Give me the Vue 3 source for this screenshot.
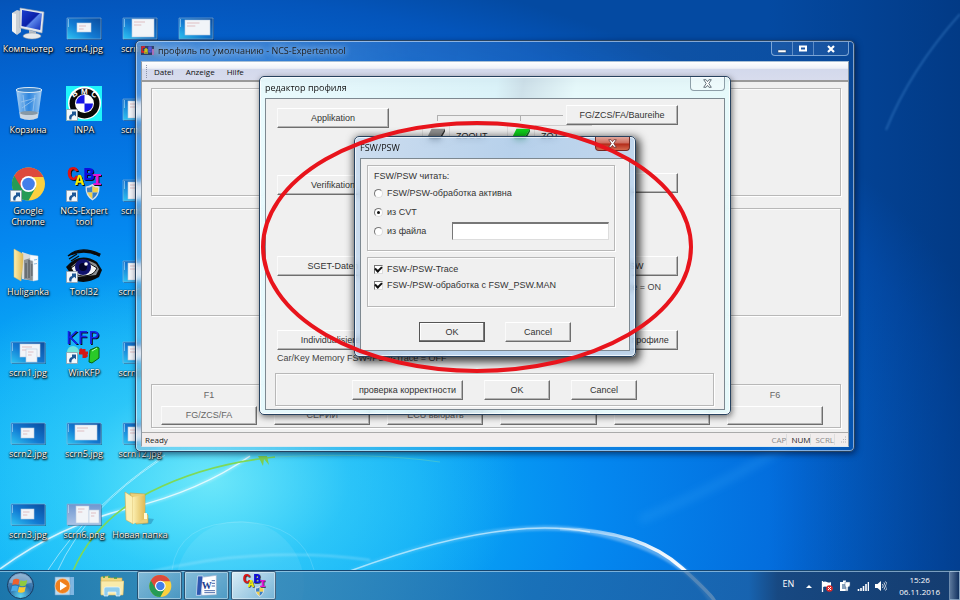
<script setup>
import { h, ref } from 'vue'

const cyanShot = (label, win) => ({ label, icon: 'shot', fill: 'url(#shotBlue)', win })

const desktopItems = [
  { label: 'Компьютер', icon: 'computer' },
  { label: 'Корзина', icon: 'bin' },
  { label: 'Google Chrome', icon: 'chrome', shortcut: true },
  { label: 'Huliganka', icon: 'folder-files' },
  cyanShot('scrn1.jpg', [[9, 2, 20, 13], [15, 7, 11, 13]]),
  cyanShot('scrn2.jpg', [[10, 5, 13, 10]]),
  cyanShot('scrn3.jpg', [[10, 5, 13, 10]]),
  cyanShot('scrn4.jpg', [[10, 5, 14, 9]]),
  { label: 'INPA', icon: 'inpa', shortcut: true },
  { label: 'NCS-Expert tool', icon: 'cabi', shortcut: true },
  { label: 'Tool32', icon: 'eye', shortcut: true },
  { label: 'WinKFP', icon: 'kfp', shortcut: true },
  cyanShot('scrn5.jpg', [[8, 2, 22, 15]]),
  { label: 'scrn6.png', icon: 'shot', fill: 'url(#shotPale)', win: [[9, 2, 13, 17], [22, 6, 10, 13]] },
  cyanShot('scrn7.jpg', [[9, 1, 22, 18]]),
  cyanShot('scrn8.jpg', [[5, 2, 26, 17]]),
  cyanShot('scrn9.jpg', [[5, 2, 26, 17]]),
  cyanShot('scrn10.jpg', [[5, 2, 26, 17]]),
  cyanShot('scrn11.jpg', [[5, 4, 26, 14]]),
  cyanShot('scrn12.jpg', [[5, 4, 26, 14]]),
  { label: 'Новая папка', icon: 'folder' },
  cyanShot('', [[6, 2, 25, 15]]),
]

const mono = 'Liberation Mono, monospace'
const sans = 'Liberation Sans, sans-serif'
const letters = {
  cabi: [
    { t: 'C', x: 1, y: 14, size: 20, fill: '#df1414', font: mono },
    { t: 'A', x: 9, y: 19, size: 15, fill: '#f5f000', font: mono },
    { t: 'B', x: 17, y: 14, size: 19, fill: '#1111dd', font: mono },
    { t: 'I', x: 26, y: 19, size: 17, fill: '#e513d5', font: mono },
  ],
  kfp: [{ t: 'KFP', x: 0, y: 16, size: 18, fill: '#1326e8', font: 'DejaVu Sans, sans-serif', weight: 400 }],
  inpa: [
    { t: 'B', x: 6, y: 12, size: 8, fill: '#fff', font: sans, turn: 'rotate(-35 8 10)' },
    { t: 'M', x: 15, y: 9, size: 8, fill: '#fff', font: sans },
    { t: 'C', x: 25, y: 12, size: 8, fill: '#fff', font: sans, turn: 'rotate(35 28 10)' },
  ],
  word: [{ t: 'W', x: 10, y: 22, size: 15, fill: '#1d3f92', font: 'Liberation Serif, serif' }],
}

const Glyph = ({ name, shortcut }) =>
  h('svg', { viewBox: '0 0 36 36', 'aria-hidden': 'true' }, [
    h('use', { href: `#i-${name}`, width: 36, height: 36 }),
    h('g', { filter: name === 'cabi' || name === 'kfp' ? 'url(#drop)' : undefined },
      (letters[name] || []).map((l) =>
        h('text', { x: l.x, y: l.y, fill: l.fill, transform: l.turn, 'font-family': l.font, 'font-size': l.size, 'font-weight': l.weight || 700 }, l.t))),
    shortcut ? h('use', { href: '#i-shortcut', x: 0, y: 24, width: 12, height: 12 }) : null,
  ])
Glyph.props = ['name', 'shortcut']

const functionKeys = [
  { key: 'F1', text: 'FG/ZCS/FA' },
  { key: '', text: 'СЕРИЙ' },
  { key: '', text: 'ECU выбрать' },
  { key: '', text: '' },
  { key: '', text: '' },
  { key: 'F6', text: '' },
]

const taskButtons = [
  { icon: 'chrome', name: 'Google Chrome' },
  { icon: 'word', name: 'Word' },
  { icon: 'cabi', name: 'NCS-Expertentool', active: true },
]

const source = ref('cvt')
const fileName = ref('')
const trace = ref(true)
const manual = ref(true)
</script>

<template>
  <div class="desktop">
    <svg class="defs" width="0" height="0" aria-hidden="true">
      <defs>
        <linearGradient id="shotBlue" x1="0" y1="1" x2="1" y2="0">
          <stop offset="0" stop-color="#2ec6f4" /><stop offset=".45" stop-color="#1279d2" /><stop offset="1" stop-color="#0a4c9e" />
        </linearGradient>
        <linearGradient id="shotPale" x1="0" y1="0" x2="0" y2="1">
          <stop offset="0" stop-color="#6f96cf" /><stop offset="1" stop-color="#a9c3e6" />
        </linearGradient>
        <linearGradient id="screen" x1="0" y1="0" x2="1" y2="1">
          <stop offset="0" stop-color="#1d3fd0" /><stop offset=".5" stop-color="#0a1fa8" /><stop offset=".55" stop-color="#5b86ea" /><stop offset="1" stop-color="#0d2bb8" />
        </linearGradient>
        <linearGradient id="folderFill" x1="0" y1="0" x2="1" y2="0">
          <stop offset="0" stop-color="#fbeeae" /><stop offset="1" stop-color="#dfb955" />
        </linearGradient>
        <linearGradient id="glassBin" x1="0" y1="0" x2="1" y2="0">
          <stop offset="0" stop-color="#d5ecfb" stop-opacity=".8" /><stop offset=".5" stop-color="#5da5e6" stop-opacity=".5" /><stop offset="1" stop-color="#d5ecfb" stop-opacity=".8" />
        </linearGradient>
        <radialGradient id="orb" cx=".5" cy=".9" r=".9">
          <stop offset="0" stop-color="#5fd4f0" /><stop offset=".5" stop-color="#2a6ca8" /><stop offset="1" stop-color="#6f9cc4" />
        </radialGradient>
        <filter id="drop" x="-10%" y="-10%" width="130%" height="130%"><feDropShadow dx="1" dy="1" stdDeviation="0" flood-color="#111" /></filter>
      </defs>

      <symbol id="i-computer" viewBox="0 0 36 36">
        <path d="M2 9l5-3 4 1v21l-4 3-5-4z" fill="#c9cfd4" /><path d="M2 9l4 1v20l-4-3z" fill="#f1f3f4" />
        <path d="M10 4l24 4-2 21-22-5z" fill="#e5e9ee" stroke="#9aa5b1" stroke-width=".6" />
        <path d="M12 6l20 3.500-1.800 16.500L11.500 22z" fill="url(#screen)" />
        <path d="M19 26l7 2v4h-7z" fill="#b9bfc5" /><ellipse cx="22" cy="32" rx="9" ry="3" fill="#e6e9eb" stroke="#8b939b" stroke-width=".5" />
      </symbol>
      <symbol id="i-bin" viewBox="0 0 36 36">
        <path d="M6 4h26l-4 29q-9 4-18 0z" fill="url(#glassBin)" />
        <ellipse cx="19" cy="5" rx="13" ry="2.500" fill="#3b83c9" stroke="#dbeaf6" />
        <path d="M13 10l2 16M25 10l-2 16M11 17l15-4M12 23l13-9" stroke="#a6cdef" stroke-width=".7" fill="none" />
        <path d="M9.500 27q9 3 19 0l-1 6q-8 4-17 0z" fill="#d7dde1" opacity=".9" /><ellipse cx="19" cy="28" rx="9" ry="2" fill="#8799a6" />
      </symbol>
      <symbol id="i-chrome" viewBox="0 0 36 36">
        <circle cx="18.500" cy="18" r="16.500" fill="#fbd03f" />
        <path d="M18.500 18L4.200 9.700A16.500 16.500 0 0 0 18.500 34.500L26 21z" fill="#259b55" />
        <path d="M4.200 9.700A16.500 16.500 0 0 1 33.400 11H18.500l-7 11z" fill="#dd4a3c" />
        <circle cx="18.500" cy="18" r="8" fill="#fff" /><circle cx="18.500" cy="18" r="6.300" fill="#437fea" />
      </symbol>
      <symbol id="i-folder-files" viewBox="0 0 36 36">
        <path d="M12 5l12 4v25l-12-2z" fill="#d9dcde" /><path d="M14 13l10-3v24l-10-2z" fill="#8b9195" />
        <path d="M16 16v15M19 13v18M22 17v12" stroke="#484f54" /><path d="M20 8l8 1v24l-5 1V14l-3-1z" fill="#f7fbff" stroke="#cbd8e2" stroke-width=".5" /><path d="M24 13l3-.5M24 17l3-.5" stroke="#8dbbe0" />
        <path d="M4 2l9 5v8l-2 19-7-4z" fill="url(#folderFill)" stroke="#d8bd68" stroke-width=".5" />
      </symbol>
      <symbol id="i-folder" viewBox="0 0 36 36">
        <path d="M24 28l8 1-3 5-9 1z" fill="#124d7f" opacity=".3" />
        <path d="M8 3l15 1v19l3 2v8l-12 1z" fill="#ecd078" stroke="#c39d44" stroke-width=".6" />
        <path d="M3 2l8 5v27l-7-4z" fill="#fbefb3" stroke="#cfaa52" stroke-width=".6" /><path d="M11 7l12-2v24l-12 5z" fill="url(#folderFill)" /><path d="M22 23h3v6h-3z" fill="#fffad9" />
      </symbol>
      <symbol id="i-inpa" viewBox="0 0 36 36">
        <path d="M0 1h36v35H0z" fill="#1ff5fa" /><circle cx="18.500" cy="18" r="16.500" fill="#fff" /><circle cx="18.500" cy="18.500" r="15" fill="#090909" />
        <circle cx="18.500" cy="18.500" r="9.500" fill="#fff" />
        <path d="M18.500 18.500V10a8.500 8.500 0 0 0-8.500 8.500zM18.500 18.500V27a8.500 8.500 0 0 0 8.500-8.500z" fill="#1515e6" />
      </symbol>
      <symbol id="i-shield" viewBox="0 0 16 18">
        <path d="M8 0q4 2.500 7.500 2.500Q16 13 8 17.500 0 13 .5 2.500 4 2.500 8 0z" fill="#d9e0e8" />
        <path d="M8 2Q5 4 2 4q0 3 .5 5H8z" fill="#3c7fc4" /><path d="M8 2q3 2 6 2 0 3-.5 5H8z" fill="#f4d147" />
        <path d="M2.500 9H8v7Q4 13 2.500 9z" fill="#f4d147" /><path d="M13.500 9H8v7q4-3 5.500-7z" fill="#3c7fc4" />
      </symbol>
      <symbol id="i-cabi" viewBox="0 0 36 36"><use href="#i-shield" x="19" y="18" width="15" height="17" /></symbol>
      <symbol id="i-eye" viewBox="0 0 36 36">
        <path d="M2 9Q14-2 34 7q-1 2-1 2Q18 1 2 9zM3 12l8-5M5 14l8-5" fill="#0b0b0b" stroke="#0b0b0b" stroke-width="1.300" />
        <path d="M0 20Q14 4 31 15l5 8-3 7q-14 8-24 3z" fill="#0b0b0b" /><path d="M5 20q11-12 25-3l3 5-3 6-18 2z" fill="#8c8f92" />
        <path d="M5 21q12-11 26 0-3 8-14 8-8 0-12-8z" fill="#f5f5f5" stroke="#0b0b0b" />
        <circle cx="17" cy="20" r="8" fill="#10126e" /><circle cx="17" cy="20" r="4" fill="#04042a" /><circle cx="20" cy="17" r="1.800" fill="#fff" />
      </symbol>
      <symbol id="i-kfp" viewBox="0 0 36 36">
        <circle cx="7" cy="24" r="6" fill="#6ee3dc" /><path d="M13 25h9M18 21v9M14 21l7 8" stroke="#d31717" stroke-width="3" />
        <path d="M24 22l7-3 2 1v10l-7 5-3-1z" fill="#2ac929" stroke="#08640f" /><path d="M26 23l5-3" stroke="#b8ffb1" />
      </symbol>
      <symbol id="i-word" viewBox="0 0 36 36">
        <path d="M10 5l22-3v29l-22 1z" fill="#fff" stroke="#9db0d0" /><path d="M25 10h5M25 14h5M25 18h5M14 25h16M14 28h16" stroke="#30519b" stroke-width="1.300" />
        <path d="M4 3h8L9 32H2z" fill="#2e57b0" stroke="#e6eefb" />
      </symbol>
      <symbol id="i-shortcut" viewBox="0 0 12 12">
        <path d="M.5.5h11v11H.5z" fill="#f2f7fb" stroke="#8f9ca8" stroke-width=".8" /><path d="M3.500 10.500Q2 6 6 5V2.500h4v5L8.500 6Q5 7 5.500 10.500z" fill="#1d5795" />
      </symbol>
    </svg>

    <svg class="wallpaper" viewBox="0 0 960 600" preserveAspectRatio="none" aria-hidden="true">
      <defs>
        <linearGradient id="arc" x1="0" x2="1"><stop offset="0" stop-color="#fff" stop-opacity=".15" /><stop offset=".6" stop-color="#fff" stop-opacity=".9" /><stop offset="1" stop-color="#fff" /></linearGradient>
        <filter id="soft"><feGaussianBlur stdDeviation="1.200" /></filter>
        <filter id="haze"><feGaussianBlur stdDeviation="4" /></filter>
      </defs>
      <g fill="none">
        <path d="M640 520Q770 465 850 400" stroke="#4cb6ff" stroke-width="7" opacity=".22" filter="url(#haze)" />
        <path d="M960 14Q910 70 886 130" stroke="#5fa9ee" stroke-width="1.500" opacity=".4" filter="url(#soft)" />
        <circle cx="240" cy="585" r="64" fill="#fff" opacity=".08" /><path d="M172 570q6-48 70-48 60 2 72 48" stroke="#fff" opacity=".15" />
        <path d="M150 572Q260 545 370 560" stroke="#fff" stroke-width="2" opacity=".25" filter="url(#soft)" />
        <path d="M0 569Q60 525 130 508T250 456" stroke="#fff" stroke-width="4" opacity=".25" filter="url(#soft)" />
        <path d="M0 569Q60 525 130 508T250 456" stroke="#fff" stroke-width="1.500" opacity=".75" />
        <path d="M48 570Q90 505 165 455M58 570Q85 510 160 460" stroke="#fff" opacity=".5" />
        <path d="M73 571Q95 520 150 492T275 457" stroke="#7ed957" stroke-width="1.600" />
        <path d="M275 457Q370 452 440 462" stroke="#8de3a0" opacity=".35" />
        <path d="M258 456l5 10 1-7 5 6-2-9z" fill="#7ccf51" />
        <path d="M350 571Q500 515 590 532T712 602" stroke="url(#arc)" stroke-width="5" opacity=".35" filter="url(#soft)" />
        <path d="M350 571Q500 515 590 532" stroke="#d9f2ff" stroke-width="1.500" opacity=".7" />
        <path d="M560 529Q640 530 682 568T712 602" stroke="url(#arc)" stroke-width="3.500" />
      </g>
    </svg>

    <ul class="icons">
      <li v-for="(item, i) in desktopItems" :key="i">
        <a href="#" class="icon">
          <svg v-if="item.icon === 'shot'" viewBox="0 0 36 36" class="glyph" aria-hidden="true">
            <path d="M2 15h34v21H2z" fill="#04294f" opacity=".45" />
            <path d="M1 14h34v21H1z" :fill="item.fill" stroke="#8db4d4" stroke-width=".6" />
            <path d="M2 16h1M2 18h1M2 20h1M2 22h1" stroke="#d8f0ff" />
            <g v-for="(w, n) in item.win" :key="n">
              <rect :x="w[0] + 1" :y="w[1] + 14" :width="w[2]" :height="w[3]" fill="#f1f4f8" stroke="#b9cbe0" stroke-width=".6" />
              <path :d="`M${w[0] + 3} ${w[1] + 17}h${w[2] / 2}M${w[0] + 3} ${w[1] + 20}h${w[2] / 3}`" stroke="#d59a9f" stroke-width=".6" />
            </g>
          </svg>
          <Glyph v-else class="glyph" :name="item.icon" :shortcut="item.shortcut" />
          <span class="caption">{{ item.label }}</span>
        </a>
      </li>
    </ul>

    <section class="window main-window">
      <header class="titlebar">
        <svg class="app-icon" viewBox="0 0 13 10" aria-hidden="true">
          <path d="M0 0h13v9H0z" fill="#12143c" opacity=".65" />
          <path d="M4 1H1v5h3" fill="none" stroke="#ee2020" stroke-width="1.400" /><path d="M4 8V3h2v5M4 5h2" fill="none" stroke="#f5f000" />
          <path d="M8 1v5h2V1zM8 3h2" fill="none" stroke="#5a5af5" stroke-width="1.200" /><path d="M12 3v6" stroke="#e989df" stroke-width="1.300" />
        </svg>
        <h1 class="title glow">профиль по умолчанию - NCS-Expertentool</h1>
        <div class="controls">
          <button type="button" aria-label="Minimize"><svg viewBox="0 0 12 10"><path d="M2 6h8v2.500H2z" fill="#fff" stroke="#304a6a" stroke-width=".5" /></svg></button>
          <button type="button" aria-label="Maximize"><svg viewBox="0 0 12 10"><path d="M3 2.500h6v4H3z" fill="none" stroke="#fff" stroke-width="2" /></svg></button>
          <button type="button" class="wide" aria-label="Close"><svg viewBox="0 0 12 10"><path d="M3 2l6 6M9 2L3 8" stroke="#fff" stroke-width="2.200" /></svg></button>
        </div>
      </header>
      <div class="client main-client">
        <nav class="menubar">
          <span class="grip"></span>
          <a href="#">Datei</a><a href="#">Anzeige</a><a href="#">Hilfe</a>
        </nav>
        <div class="workspace">
          <div class="etched panel"></div>
          <div class="etched panel"></div>
          <div class="etched keys">
            <div v-for="(f, i) in functionKeys" :key="i" class="key">
              <span class="key-name">{{ f.key }}</span>
              <button type="button" class="btn muted">{{ f.text }}</button>
            </div>
          </div>
        </div>
        <footer class="status">
          <span class="ready">Ready</span><span class="lock">CAP</span><span class="lock on">NUM</span><span class="lock">SCRL</span>
          <svg class="sizer" viewBox="0 0 8 8" aria-hidden="true"><path d="M6 1h1M4 3.500h1M6 3.500h1M2 6h1M4 6h1M6 6h1" stroke="#b5b5b5" stroke-width="1.200" /></svg>
        </footer>
      </div>
    </section>

    <section class="window profile-window">
      <header class="titlebar">
        <h2 class="title">редактор профиля</h2>
        <button type="button" class="close pale" aria-label="Close"><svg viewBox="0 0 12 10"><path d="M2.500 1.500h2.200L6 3.300l1.300-1.800h2.200L7.200 5l2.300 3.500H7.300L6 6.700 4.700 8.500H2.500L4.800 5z" fill="#fff" stroke="#505e68" stroke-width=".8" /></svg></button>
      </header>
      <div class="client profile-client">
        <div class="columns">
          <div class="col left">
            <button type="button" class="btn">Applikation</button>
            <button type="button" class="btn">Verifikation</button>
            <button type="button" class="btn">SGET-Daten</button>
            <button type="button" class="btn">Individualisieren</button>
            <span class="note">Car/Key Memory FSW-/PSW-Trace = OFF</span>
          </div>
          <div class="flow">
            <div class="bus"><span></span></div>
            <div class="leds">
              <svg viewBox="0 0 28 20" aria-hidden="true"><path d="M9 3h15l-5 8H5z" fill="#909090" /><path d="M24 3v3l-5 9H7l-2-4h14z" fill="#333" /></svg>
              <span class="cell">ZOOUT</span>
              <svg viewBox="0 0 28 20" aria-hidden="true"><path d="M9 3h15l-5 8H5z" fill="#0ed11c" /><path d="M24 3v3l-5 9H7l-2-4h14z" fill="#0d7c1c" /></svg>
              <span class="cell">ZOT</span>
            </div>
          </div>
          <div class="col right">
            <button type="button" class="btn">FG/ZCS/FA/Baureihe</button>
            <button type="button" class="btn" aria-label="Option"></button>
            <button type="button" class="btn">FSW/PSW</button>
            <span class="note">FSW-/PSW-Trace = ON</span>
            <button type="button" class="btn">параметры в профиле</button>
          </div>
        </div>
        <div class="etched actions">
          <button type="button" class="btn large">проверка корректности</button>
          <button type="button" class="btn small">OK</button>
          <button type="button" class="btn small">Cancel</button>
        </div>
      </div>
    </section>

    <section class="window fsw-window">
      <header class="titlebar">
        <h2 class="title">FSW/PSW</h2>
        <button type="button" class="close red" aria-label="Close"><svg viewBox="0 0 12 10"><path d="M2.500 1.500h2.200L6 3.300l1.300-1.800h2.200L7.200 5l2.300 3.500H7.300L6 6.700 4.700 8.500H2.500L4.800 5z" fill="#fff" stroke="#63302e" stroke-width=".7" /></svg></button>
      </header>
      <form class="client fsw-client" @submit.prevent>
        <div class="etched source" role="radiogroup" aria-labelledby="src-title">
          <span id="src-title" class="legend">FSW/PSW читать:</span>
          <label class="option"><input v-model="source" type="radio" name="source" value="active" />FSW/PSW-обработка активна</label>
          <label class="option"><input v-model="source" type="radio" name="source" value="cvt" />из CVT</label>
          <div class="file-row">
            <label class="option"><input v-model="source" type="radio" name="source" value="file" />из файла</label>
            <input v-model="fileName" type="text" class="file" aria-label="из файла" />
          </div>
        </div>
        <div class="etched checks">
          <label class="option"><input v-model="trace" type="checkbox" />FSW-/PSW-Trace</label>
          <label class="option"><input v-model="manual" type="checkbox" />FSW-/PSW-обработка с FSW_PSW.MAN</label>
        </div>
        <div class="buttons">
          <button type="submit" class="btn small default">OK</button>
          <button type="button" class="btn small">Cancel</button>
        </div>
      </form>
    </section>

    <svg class="marker" viewBox="0 0 432 252" aria-hidden="true"><ellipse cx="216" cy="126" rx="214" ry="124" fill="none" stroke="#e8141c" stroke-width="4" /></svg>

    <footer class="taskbar">
      <button type="button" class="start" aria-label="Пуск">
        <svg viewBox="0 0 30 30">
          <circle cx="15" cy="15" r="13.500" fill="url(#orb)" stroke="#16395e" /><path d="M3 12a12.500 12.500 0 0 1 24 0Q15 16 3 12z" fill="#fff" opacity=".3" />
          <path d="M7.500 9q3.500-2 6.500 0l-1.200 5.500q-3.200-1.700-6.300 0z" fill="#f0602c" /><path d="M15 9.500q3.500 1.700 7-.3l-1.300 5.600q-3.400 1.700-6.900.2z" fill="#8fca3e" />
          <path d="M6.300 15.800q3.200-1.700 6.300 0l-1.200 5.400q-3-1.700-6.300 0z" fill="#49a9e8" /><path d="M13.500 16.200q3.500 1.500 7-.2l-1.300 5.500q-3.400 1.700-6.900.2z" fill="#fdc92f" />
        </svg>
      </button>
      <button type="button" class="pinned" aria-label="Media Player">
        <svg viewBox="0 0 24 24"><path d="M7 3h15v18H7z" fill="#7eb6e2" /><path d="M3 3h15v18H3z" fill="#b6daf2" stroke="#6b9cc4" stroke-width=".6" /><circle cx="10.500" cy="12" r="7.500" fill="#f0801d" stroke="#fbd7ac" stroke-width=".6" /><path d="M8 7.500l7 4.500-7 4.500z" fill="#fff" /></svg>
      </button>
      <button type="button" class="pinned" aria-label="Explorer">
        <svg viewBox="0 0 24 24"><path d="M1 3l8-1 1 2h12v16H1z" fill="#f2d77d" stroke="#c9a84a" stroke-width=".6" /><path d="M3 3h2M8 3h2M14 4h3" stroke="#3d9c4d" stroke-width="1.500" /><path d="M1 7h23l-1 14H1z" fill="#faebab" stroke="#d3b660" stroke-width=".6" /><path d="M4 22v-7q0-2 2-2h12q2 0 2 2v7h-4v-4H8v4z" fill="#8fcdee" stroke="#e8f7ff" stroke-width=".7" /></svg>
      </button>
      <button v-for="t in taskButtons" :key="t.icon" type="button" class="task" :class="{ active: t.active }" :aria-label="t.name">
        <Glyph class="task-glyph" :name="t.icon" />
      </button>
      <div class="tray">
        <span class="lang">EN</span>
        <svg class="tiny" viewBox="0 0 12 12"><path d="M3 8l3-3 3 3z" fill="#fff" /></svg>
        <svg class="tiny" viewBox="0 0 12 12"><path d="M1.500 1v11" stroke="#fff" stroke-width="1.300" /><path d="M2 2q2-1 4 0t4 0v5q-2 1-4 0t-4 0z" fill="#fff" /><circle cx="8.500" cy="8.500" r="3.300" fill="#dc2a2a" /><path d="M7 7l3 3M10 7l-3 3" stroke="#fff" /></svg>
        <svg class="tiny" viewBox="0 0 12 12"><path d="M1 2h3V.5h3V2h1v9H1z" fill="#fff" /><path d="M3 4h4v5H3z" fill="#8aa2bb" /><path d="M6 2h5v3q0 2-2 2v4H7V7Q6 7 6 5z" fill="#fff" stroke="#4c6a8c" stroke-width=".5" /></svg>
        <svg class="tiny" viewBox="0 0 12 12"><path d="M1.500 9v2M4 8v3M6.500 6v5M9 4v7M11.500 2v9" stroke="#fff" stroke-width="1.600" /></svg>
        <svg class="tiny" viewBox="0 0 12 12"><path d="M0 4h2.500L6 1v10L2.500 8H0z" fill="#fff" /><path d="M7.500 4q1.500 2 0 4M9 2.500q3 3.500 0 7M10.500 1.500q4 4.500 0 9" fill="none" stroke="#fff" stroke-width=".8" /></svg>
        <div class="clock"><span>15:26</span><span>06.11.2016</span></div>
      </div>
      <button type="button" class="peek" aria-label="Показать рабочий стол"></button>
    </footer>
  </div>
</template>

<style>
body { margin: 0; overflow: hidden; }
</style>

<style scoped>
* { box-sizing: border-box; }
.desktop {
  position: relative; display: flex; flex-direction: column; height: 100vh; overflow: hidden;
  font: 9px/11px "Open Sans", "Noto Sans", sans-serif; color: #222;
  background:
    radial-gradient(ellipse 32% 36% at 22% 80%, rgba(140, 245, 250, .75), rgba(90, 225, 250, .4) 45%, rgba(60, 200, 250, 0)),
    linear-gradient(90deg, rgba(0, 60, 150, 0) 80%, rgba(0, 45, 110, .55)),
    radial-gradient(ellipse 92% 92% at 16% 84%, #12c4fa 0, #09aaf6 30%, #0488f0 50%, #036cdc 72%, #0455bb 92%, #044aa2 100%);
}
.defs { position: absolute; }
.wallpaper { position: absolute; inset: 0; width: 100%; height: 100%; }
button, input { font: inherit; color: inherit; margin: 0; padding: 0; }
a { color: inherit; text-decoration: none; }
h1, h2 { margin: 0; font-size: inherit; font-weight: 400; }

.icons {
  position: relative; flex: 1; min-height: 0; margin: 0; padding: 4px 0 0; list-style: none;
  display: grid; grid-auto-flow: column; grid-template-rows: repeat(7, 81px); grid-auto-columns: 56px;
}
.icon { display: flex; flex-direction: column; align-items: center; gap: 3px; color: #fff; }
.glyph { width: 36px; height: 36px; }
.caption { text-align: center; text-shadow: 0 1px 2px #000, 1px 1px 2px #000, 0 0 1px #000; }

.window {
  position: absolute; display: flex; flex-direction: column;
  border: 1px solid #27425f; border-radius: 5px;
  backdrop-filter: blur(3px);
}
.titlebar { display: flex; align-items: center; }
.title { flex: 1; white-space: nowrap; }
.client { flex: 1; display: flex; flex-direction: column; background: #f0f0f0; border: 1px solid #7d8890; font-family: "Liberation Sans", Arial, sans-serif; }
.etched { border: 1px solid #b8b8b8; box-shadow: 1px 1px 0 #fff, inset 1px 1px 0 #fbfbfb; }
.btn {
  height: 20px; background: #f0f0f0; border: 1px solid; border-color: #fff #6e6e6e #6e6e6e #fafafa;
  box-shadow: inset -1px -1px 0 #b4b4b4; white-space: nowrap; text-align: center; color: #333;
}

.main-window {
  left: 135px; top: 40px; width: 720px; height: 412px; padding: 0 5px 4px;
  background: linear-gradient(100deg, rgba(190, 215, 240, .4), rgba(120, 165, 215, .22) 35%, rgba(70, 130, 195, .2) 55%, rgba(20, 80, 150, .2));
  box-shadow: inset 0 0 0 1px rgba(255, 255, 255, .5), 1px 2px 6px rgba(0, 10, 40, .6);
}
.main-window .titlebar { height: 20px; align-items: flex-start; padding-top: 1px; gap: 4px; }
.app-icon { width: 13px; height: 10px; margin-top: 4px; }
.glow { line-height: 18px; text-shadow: 0 0 6px rgba(255, 255, 255, .8), 0 0 8px rgba(255, 255, 255, .5); }
.controls { display: flex; border: 1px solid rgba(200, 225, 250, .6); border-top: 0; border-radius: 0 0 4px 4px; }
.controls button { display: flex; align-items: center; justify-content: center; width: 21px; height: 13px; border: 0; border-right: 1px solid rgba(200, 225, 250, .4); background: rgba(255, 255, 255, .06); }
.controls .wide { width: 34px; border-right: 0; }
.controls svg { width: 12px; height: 10px; }
.menubar {
  display: flex; align-items: center; gap: 12px; height: 20px; padding-left: 4px; color: #111;
  background: linear-gradient(#fff, #eef1f8 35%, #d3d9ec 40%, #d8dced); border-bottom: 2px solid #9a9a9a;
  font-family: "Open Sans", "Noto Sans", sans-serif; font-size: 8px;
}
.grip { height: 13px; margin-right: -5px; border-left: 1px dotted #8b93a8; }
.main-client { border-color: #a9c0d6 #8e9aa5 #dce8f0; }
.workspace { flex: 1; display: flex; flex-direction: column; padding: 6px 7px 4px 9px; }
.panel { height: 108px; margin-bottom: 12px; }
.keys { flex: none; display: grid; grid-template-columns: repeat(6, 1fr); column-gap: 17px; height: 44px; margin-top: auto; padding: 5px 17px 0 9px; }
.key { display: flex; flex-direction: column; gap: 5px; text-align: center; color: #666; }
.key-name { height: 11px; }
.btn.muted { height: 19px; color: #666; }
.status { display: flex; align-items: center; gap: 4px; height: 14px; padding: 0 1px 0 3px; border-top: 1px solid #aaa; background: #f1eded; font-family: "Open Sans", "Noto Sans", sans-serif; font-size: 8px; }
.ready { flex: 1; }
.lock { color: #8a8a8a; border-right: 1px solid #ddd; }
.lock.on { color: #222; }
.sizer { width: 8px; height: 8px; }

.profile-window {
  left: 259px; top: 76px; width: 472px; height: 339px; padding: 0 5px 4px;
  background: linear-gradient(100deg, rgba(232, 252, 255, .85), rgba(215, 243, 250, .85) 45%, rgba(200, 222, 232, .85) 50%, rgba(228, 250, 252, .85) 60%);
  box-shadow: inset 0 0 0 1px rgba(255, 255, 255, .8), 1px 2px 6px rgba(0, 0, 0, .55);
}
.profile-window .titlebar, .fsw-window .titlebar { height: 21px; flex: none; align-items: flex-start; }
.profile-window .title, .fsw-window .title { line-height: 21px; color: #111; }
.close { display: flex; align-items: center; justify-content: center; width: 35px; height: 14px; border: 1px solid; border-top: 0; border-radius: 0 0 4px 4px; }
.close svg { width: 13px; height: 11px; }
.close.pale { border-color: #8d9ea8; background: rgba(255, 255, 255, .35); }
.close.red { border-color: #702a24; background: linear-gradient(#e2a79c, #cc6a5b 48%, #b22a18 52%, #d46a4e); }
.profile-client { padding: 6px 10px 3px 9px; }
.columns { flex: 1; display: flex; justify-content: space-between; padding: 0 36px 0 2px; }
.col { flex: none; display: grid; width: 112px; grid-template-columns: 112px; align-content: start; }
.col.left { grid-template-rows: 67px 81px 74px 23px 11px; padding-top: 3px; }
.col.right { grid-template-rows: 68px 83px 26px 48px 20px; }
.note { white-space: nowrap; color: #444; }
.flow { flex: 1; min-width: 0; margin: 10px 3px 0 48px; }
.bus { height: 6px; border-top: 1px solid #b0b0b0; border-left: 1px solid #b0b0b0; display: flex; }
.bus span { width: 66%; border-right: 1px solid #b0b0b0; }
.leds { display: flex; margin: 4px 0 0 -15px; }
.leds svg { width: 28px; height: 20px; flex: none; border: 1px solid #ddd; }
.cell { flex: none; width: 57px; padding: 5px 0 0 6px; border-top: 1px solid #ccc; color: #222; }
.actions { display: flex; justify-content: center; gap: 21px; height: 33px; padding: 6px 0 0 0; }
.small { width: 66px; }
.large { width: 111px; }

.fsw-window {
  left: 354px; top: 136px; width: 282px; height: 221px; padding: 0 5px 5px;
  background: linear-gradient(100deg, rgba(180, 208, 238, .6), rgba(145, 188, 232, .6) 50%, rgba(165, 200, 236, .6));
  box-shadow: inset 0 0 0 1px rgba(255, 255, 255, .7), 2px 3px 9px 2px rgba(0, 0, 0, .75);
}
.fsw-client { padding: 6px 14px 0 6px; }
.source { display: grid; align-content: start; grid-template-rows: 16px 19px 19px 18px; height: 86px; padding: 2px 5px 0 6px; align-items: center; }
.legend, .option { color: #333; }
.option { display: flex; align-items: center; gap: 4px; white-space: nowrap; }
.option input { appearance: none; flex: none; width: 9px; height: 9px; background: #fff; border: 1px solid; border-color: #777 #ddd #ddd #777; display: grid; place-items: center; }
.option input[type="radio"] { border-radius: 50%; }
.option input[type="radio"]:checked::after { content: ""; width: 3px; height: 3px; border-radius: 50%; background: #111; }
.option input[type="checkbox"]:checked::after { content: ""; width: 5px; height: 3px; border: solid #111; border-width: 0 0 2px 2px; transform: translateY(-1px) rotate(-45deg); }
.file-row { display: flex; justify-content: space-between; align-items: center; }
.file { width: 157px; height: 18px; background: #fff; border: 1px solid; border-color: #777 #ddd #ddd #777; padding: 0 3px; border-top-width: 2px; }
.checks { display: flex; flex-direction: column; gap: 5px; height: 50px; margin-top: 6px; padding: 6px; }
.buttons { display: flex; justify-content: center; gap: 20px; margin-top: 15px; padding-left: 8px; }
.default { border-color: #555; box-shadow: inset -1px -1px 0 #777, inset 1px 1px 0 #fff; }

.marker { position: absolute; left: 261px; top: 121px; width: 432px; height: 252px; pointer-events: none; }

.taskbar {
  position: relative; flex: none; display: flex; align-items: stretch; height: 30px; border-top: 1px solid #16456f; color: #fff;
  box-shadow: inset 0 1px 0 rgba(190, 225, 245, .6);
  background: linear-gradient(90deg, rgba(30, 105, 155, .82), rgba(60, 135, 180, .85) 25%, rgba(30, 105, 170, .8) 55%, rgba(30, 95, 160, .75) 78%, rgba(26, 68, 118, .88) 81%, rgba(22, 60, 108, .9));
}
.taskbar button { display: flex; align-items: center; justify-content: center; border: 0; background: none; }
.start { width: 40px; }
.start svg { width: 29px; height: 29px; }
.taskbar .pinned { width: 48px; }
.pinned svg { width: 24px; height: 24px; }
.taskbar .task { width: 45px; margin: 0 0 0 2px; border: 1px solid rgba(20, 50, 80, .7); border-radius: 2px; background: linear-gradient(135deg, rgba(200, 230, 245, .55), rgba(140, 190, 220, .25)); box-shadow: inset 0 0 0 1px rgba(255, 255, 255, .4); }
.taskbar .pinned + .task { margin-left: 1px; }
.taskbar .task.active { background: linear-gradient(135deg, rgba(245, 252, 255, .85), rgba(160, 205, 230, .6)); }
.task-glyph { width: 24px; height: 24px; }
.tray { margin-left: auto; display: flex; align-items: center; gap: 6px; }
.lang { margin: 0 3px 5px 0; }
.tiny { width: 12px; height: 12px; }
.clock { display: flex; flex-direction: column; align-items: center; font-size: 8px; line-height: 12px; margin: 0 9px 0 6px; }
.taskbar .peek { width: 11px; border: 1px solid rgba(170, 200, 225, .6); background: linear-gradient(90deg, rgba(255, 255, 255, .3), rgba(10, 30, 70, .4)); }
</style>
